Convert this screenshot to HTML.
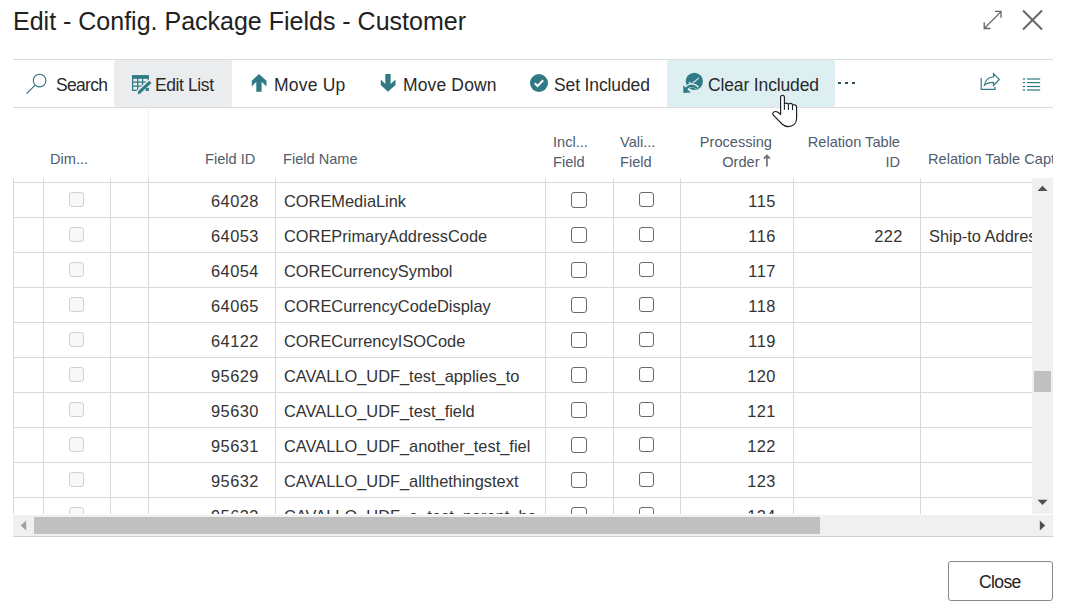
<!DOCTYPE html>
<html><head><meta charset="utf-8">
<style>
*{box-sizing:border-box;margin:0;padding:0}
html,body{width:1075px;height:608px;overflow:hidden;background:#fff}
body{position:relative;font-family:"Liberation Sans",sans-serif;color:#212121}
.a{position:absolute;white-space:nowrap}
.title{left:13px;top:4px;font-size:25px;line-height:34px;color:#212121}
.tb{font-size:17.5px;line-height:20px;color:#2a2a2a}
.hd{font-size:14.6px;line-height:20px;color:#505c6d}
.cell{font-size:16.4px;line-height:20px;color:#333}
.vl{position:absolute;width:1px;background:#d8d8de}
.hl{position:absolute;height:1px;background:#d8d8de}
.cb{position:absolute;width:16px;height:16px;border:1.5px solid #6a6a6a;border-radius:3px;background:#fff}
.cbd{position:absolute;width:15px;height:15px;border:1px solid #d2d2d2;border-radius:3px;background:#f8f8f8}
</style></head><body>

<div class="a title">Edit - Config. Package Fields - Customer</div>
<svg class="a" style="left:980px;top:8px" width="24" height="24" viewBox="0 0 24 24" fill="none" stroke="#666" stroke-width="1.3">
<path d="M4.2 20.5 L21 3.6 M15 3.4 H21 V9.8 M4.2 14.2 V20.5 H10.4"/></svg>
<svg class="a" style="left:1020px;top:8px" width="24" height="24" viewBox="0 0 24 24" fill="none" stroke="#666" stroke-width="2">
<path d="M3 2.5 L22 21.5 M22 2.5 L3 21.5"/></svg>
<div class="hl" style="left:13px;top:59px;width:1040px;background:#dcdcdc"></div>
<div class="hl" style="left:13px;top:107px;width:1040px;background:#dcdcdc"></div>
<div class="a" style="left:114px;top:60px;width:118px;height:47px;background:#ebecee;border-radius:2px"></div>
<div class="a" style="left:667px;top:60px;width:168px;height:47px;background:#ddeff1;border-radius:2px"></div>
<div class="a tb" style="left:56px;top:75px;letter-spacing:-0.7px">Search</div>
<div class="a tb" style="left:155px;top:75px;letter-spacing:-0.4px">Edit List</div>
<div class="a tb" style="left:274px;top:75px;letter-spacing:0.2px">Move Up</div>
<div class="a tb" style="left:403px;top:75px;letter-spacing:0.14px">Move Down</div>
<div class="a tb" style="left:554px;top:75px;letter-spacing:-0.13px">Set Included</div>
<div class="a tb" style="left:708px;top:75px;letter-spacing:-0.14px">Clear Included</div>
<div class="a" style="left:838px;top:82px;width:3px;height:2px;background:#2f4f5c"></div>
<div class="a" style="left:845px;top:82px;width:3px;height:2px;background:#2f4f5c"></div>
<div class="a" style="left:852px;top:82px;width:3px;height:2px;background:#2f4f5c"></div>
<svg class="a" style="left:24px;top:72px" width="26" height="24" viewBox="0 0 26 24" fill="none" stroke="#2f6d7c" stroke-width="1.1">
<circle cx="15.6" cy="8.6" r="6.3"/><path d="M11.1 13.2 L2.6 21.6"/></svg>
<svg class="a" style="left:131px;top:74px" width="22" height="21" viewBox="0 0 22 21">
<g fill="none" stroke="#2f7a85" stroke-width="1.25">
<rect x="1.6" y="2" width="15.6" height="14.3"/>
<path d="M1.6 8.1 H17.2 M1.6 12.1 H17.2 M6.7 4 V16.3 M11.6 4 V16.3"/>
</g>
<rect x="1" y="1.2" width="16.8" height="3.6" fill="#2f7a85"/>
<path d="M7.2 19.4 L19.6 7.6" stroke="#ebecee" stroke-width="6"/>
<path d="M8.2 18.4 L19.4 7.8" stroke="#2f7a85" stroke-width="3.1"/>
<path d="M6.6 20.2 L7.4 17 L9.8 19.3 Z" fill="#2f7a85"/>
<rect x="14.8" y="14" width="2.6" height="2.6" fill="#2f7a85"/>
</svg>
<svg class="a" style="left:250px;top:74px" width="18" height="18" viewBox="0 0 18 18">
<path d="M8.9 0.1 L16.5 6.8 L16.5 12.5 L11.6 7.8 L11.6 17.8 L6.3 17.8 L6.3 7.8 L1.8 12.5 L1.8 6.8 Z" fill="#2f7a85"/></svg>
<svg class="a" style="left:379px;top:74px" width="18" height="18" viewBox="0 0 18 18">
<path d="M8.9 17.8 L16.5 11.1 L16.5 5.4 L11.6 10.1 L11.6 0.1 L6.3 0.1 L6.3 10.1 L1.8 5.4 L1.8 11.1 Z" fill="#2f7a85"/></svg>
<svg class="a" style="left:530px;top:74px" width="18" height="18" viewBox="0 0 18 18">
<circle cx="9" cy="9" r="9" fill="#2f7a85"/><path d="M4.8 9.2 L7.6 12 L13.2 6.3" fill="none" stroke="#fff" stroke-width="2"/></svg>
<svg class="a" style="left:681px;top:70px" width="24" height="24" viewBox="0 0 24 24">
<circle cx="13.3" cy="11.3" r="8.6" fill="#2f7a85"/>
<path d="M7.8 12.6 H9.6 M11.8 12.6 L13.6 11.6 L17.9 7.8" fill="none" stroke="#ddeff1" stroke-width="1.1"/>
<path d="M4.5 19.5 Q10.5 11.5 16.5 18" fill="none" stroke="#ddeff1" stroke-width="4.2"/>
<path d="M5.2 18.6 Q10.5 13.2 16 18.2" fill="none" stroke="#2f7a85" stroke-width="2.3"/>
<path d="M2.2 15.2 L2.4 23 L9.8 22.6 Z" fill="#2f7a85"/>
</svg>
<svg class="a" style="left:979px;top:72px" width="22" height="20" viewBox="0 0 22 20" fill="none" stroke="#2f7a85" stroke-width="1.2">
<path d="M2.2 6 V17.4 H16 V15"/>
<path d="M5.5 13.1 C6.5 7.5 10 5 14.5 5 V1.6 L20.3 7.5 L14.5 13.5 V10.3 C10 10.3 7.5 11 5.5 13.1 Z" stroke-linejoin="miter"/>
</svg>
<svg class="a" style="left:1022px;top:77px" width="20" height="15" viewBox="0 0 20 15" fill="#2f7a85">
<rect x="0.8" y="1.4" width="2.4" height="1.2"/><rect x="5" y="1.4" width="13.2" height="1.2"/>
<rect x="0.8" y="5.0" width="2.4" height="1.2"/><rect x="5" y="5.0" width="13.2" height="1.2"/>
<rect x="0.8" y="8.9" width="2.4" height="1.2"/><rect x="5" y="8.9" width="13.2" height="1.2"/>
<rect x="0.8" y="12.4" width="2.4" height="1.2"/><rect x="5" y="12.4" width="13.2" height="1.2"/>
</svg>
<div class="vl" style="left:148px;top:108px;height:70px;background:#efefef"></div>
<div class="a hd" style="left:50px;top:149px">Dim...</div>
<div class="a hd" style="left:205px;top:149px">Field ID</div>
<div class="a hd" style="left:283px;top:149px">Field Name</div>
<div class="a hd" style="left:553px;top:132px">Incl...<br>Field</div>
<div class="a hd" style="left:620px;top:132px">Vali...<br>Field</div>
<div class="a hd" style="left:680px;top:132px;width:92px;text-align:right">Processing</div>
<div class="a hd" style="left:680px;top:152px;width:79.5px;text-align:right">Order</div>
<svg class="a" style="left:763px;top:154px" width="8" height="13" viewBox="0 0 8 13" fill="none" stroke="#707070" stroke-width="1.7"><path d="M3.9 1.5 V12.5 M0.9 4.6 L3.9 1.4 L6.9 4.6"/></svg>
<div class="a hd" style="left:793px;top:132px;width:107px;text-align:right">Relation Table<br>ID</div>
<div class="a" style="left:921px;top:149px;width:132px;overflow:hidden"><div class="hd" style="white-space:nowrap;padding-left:7px">Relation Table Caption</div></div>
<div class="a" style="left:0;top:178px;width:1032px;height:336px;overflow:hidden">
<div class="vl" style="left:13px;top:0;height:336px"></div>
<div class="vl" style="left:43px;top:0;height:336px"></div>
<div class="vl" style="left:110px;top:0;height:336px"></div>
<div class="vl" style="left:148px;top:0;height:336px"></div>
<div class="vl" style="left:275px;top:0;height:336px"></div>
<div class="vl" style="left:545px;top:0;height:336px"></div>
<div class="vl" style="left:613px;top:0;height:336px"></div>
<div class="vl" style="left:680px;top:0;height:336px"></div>
<div class="vl" style="left:793px;top:0;height:336px"></div>
<div class="vl" style="left:920px;top:0;height:336px"></div>
<div class="hl" style="left:13px;top:4px;width:1019px"></div>
<div class="hl" style="left:13px;top:39px;width:1019px"></div>
<div class="hl" style="left:13px;top:74px;width:1019px"></div>
<div class="hl" style="left:13px;top:109px;width:1019px"></div>
<div class="hl" style="left:13px;top:144px;width:1019px"></div>
<div class="hl" style="left:13px;top:179px;width:1019px"></div>
<div class="hl" style="left:13px;top:214px;width:1019px"></div>
<div class="hl" style="left:13px;top:249px;width:1019px"></div>
<div class="hl" style="left:13px;top:284px;width:1019px"></div>
<div class="hl" style="left:13px;top:319px;width:1019px"></div>
<div class="cbd" style="left:69px;top:14px"></div>
<div class="a cell" style="left:148px;top:13px;width:111px;text-align:right;letter-spacing:0.5px">64028</div>
<div class="a" style="left:276px;top:13px;width:269px;overflow:hidden"><div class="cell" style="padding-left:8px;white-space:nowrap">COREMediaLink</div></div>
<div class="cb" style="left:571px;top:14px"></div>
<div class="cb" style="left:639px;top:14px;width:15px;height:15px"></div>
<div class="a cell" style="left:680px;top:13px;width:96px;text-align:right;letter-spacing:0.5px">115</div>
<div class="cbd" style="left:69px;top:49px"></div>
<div class="a cell" style="left:148px;top:48px;width:111px;text-align:right;letter-spacing:0.5px">64053</div>
<div class="a" style="left:276px;top:48px;width:269px;overflow:hidden"><div class="cell" style="padding-left:8px;white-space:nowrap">COREPrimaryAddressCode</div></div>
<div class="cb" style="left:571px;top:49px"></div>
<div class="cb" style="left:639px;top:49px;width:15px;height:15px"></div>
<div class="a cell" style="left:680px;top:48px;width:96px;text-align:right;letter-spacing:0.5px">116</div>
<div class="a cell" style="left:793px;top:48px;width:110px;text-align:right;letter-spacing:0.5px">222</div>
<div class="a" style="left:921px;top:48px;width:111px;overflow:hidden"><div class="cell" style="padding-left:8px;white-space:nowrap">Ship-to Address</div></div>
<div class="cbd" style="left:69px;top:84px"></div>
<div class="a cell" style="left:148px;top:83px;width:111px;text-align:right;letter-spacing:0.5px">64054</div>
<div class="a" style="left:276px;top:83px;width:269px;overflow:hidden"><div class="cell" style="padding-left:8px;white-space:nowrap">CORECurrencySymbol</div></div>
<div class="cb" style="left:571px;top:84px"></div>
<div class="cb" style="left:639px;top:84px;width:15px;height:15px"></div>
<div class="a cell" style="left:680px;top:83px;width:96px;text-align:right;letter-spacing:0.5px">117</div>
<div class="cbd" style="left:69px;top:119px"></div>
<div class="a cell" style="left:148px;top:118px;width:111px;text-align:right;letter-spacing:0.5px">64065</div>
<div class="a" style="left:276px;top:118px;width:269px;overflow:hidden"><div class="cell" style="padding-left:8px;white-space:nowrap">CORECurrencyCodeDisplay</div></div>
<div class="cb" style="left:571px;top:119px"></div>
<div class="cb" style="left:639px;top:119px;width:15px;height:15px"></div>
<div class="a cell" style="left:680px;top:118px;width:96px;text-align:right;letter-spacing:0.5px">118</div>
<div class="cbd" style="left:69px;top:154px"></div>
<div class="a cell" style="left:148px;top:153px;width:111px;text-align:right;letter-spacing:0.5px">64122</div>
<div class="a" style="left:276px;top:153px;width:269px;overflow:hidden"><div class="cell" style="padding-left:8px;white-space:nowrap">CORECurrencyISOCode</div></div>
<div class="cb" style="left:571px;top:154px"></div>
<div class="cb" style="left:639px;top:154px;width:15px;height:15px"></div>
<div class="a cell" style="left:680px;top:153px;width:96px;text-align:right;letter-spacing:0.5px">119</div>
<div class="cbd" style="left:69px;top:189px"></div>
<div class="a cell" style="left:148px;top:188px;width:111px;text-align:right;letter-spacing:0.5px">95629</div>
<div class="a" style="left:276px;top:188px;width:269px;overflow:hidden"><div class="cell" style="padding-left:8px;white-space:nowrap">CAVALLO_UDF_test_applies_to</div></div>
<div class="cb" style="left:571px;top:189px"></div>
<div class="cb" style="left:639px;top:189px;width:15px;height:15px"></div>
<div class="a cell" style="left:680px;top:188px;width:96px;text-align:right;letter-spacing:0.5px">120</div>
<div class="cbd" style="left:69px;top:224px"></div>
<div class="a cell" style="left:148px;top:223px;width:111px;text-align:right;letter-spacing:0.5px">95630</div>
<div class="a" style="left:276px;top:223px;width:269px;overflow:hidden"><div class="cell" style="padding-left:8px;white-space:nowrap">CAVALLO_UDF_test_field</div></div>
<div class="cb" style="left:571px;top:224px"></div>
<div class="cb" style="left:639px;top:224px;width:15px;height:15px"></div>
<div class="a cell" style="left:680px;top:223px;width:96px;text-align:right;letter-spacing:0.5px">121</div>
<div class="cbd" style="left:69px;top:259px"></div>
<div class="a cell" style="left:148px;top:258px;width:111px;text-align:right;letter-spacing:0.5px">95631</div>
<div class="a" style="left:276px;top:258px;width:269px;overflow:hidden"><div class="cell" style="padding-left:8px;white-space:nowrap">CAVALLO_UDF_another_test_fiel</div></div>
<div class="cb" style="left:571px;top:259px"></div>
<div class="cb" style="left:639px;top:259px;width:15px;height:15px"></div>
<div class="a cell" style="left:680px;top:258px;width:96px;text-align:right;letter-spacing:0.5px">122</div>
<div class="cbd" style="left:69px;top:294px"></div>
<div class="a cell" style="left:148px;top:293px;width:111px;text-align:right;letter-spacing:0.5px">95632</div>
<div class="a" style="left:276px;top:293px;width:269px;overflow:hidden"><div class="cell" style="padding-left:8px;white-space:nowrap">CAVALLO_UDF_allthethingstext</div></div>
<div class="cb" style="left:571px;top:294px"></div>
<div class="cb" style="left:639px;top:294px;width:15px;height:15px"></div>
<div class="a cell" style="left:680px;top:293px;width:96px;text-align:right;letter-spacing:0.5px">123</div>
<div class="cbd" style="left:69px;top:329px"></div>
<div class="a cell" style="left:148px;top:328px;width:111px;text-align:right;letter-spacing:0.5px">95633</div>
<div class="a" style="left:276px;top:328px;width:269px;overflow:hidden"><div class="cell" style="padding-left:8px;white-space:nowrap">CAVALLO_UDF_a_test_parent_ba</div></div>
<div class="cb" style="left:571px;top:329px"></div>
<div class="cb" style="left:639px;top:329px;width:15px;height:15px"></div>
<div class="a cell" style="left:680px;top:328px;width:96px;text-align:right;letter-spacing:0.5px">124</div>
</div>
<div class="a" style="left:1032px;top:178px;width:21px;height:336px;background:#f0f0f0"></div>
<div class="a" style="left:1034px;top:371px;width:17px;height:21px;background:#c0c0c0"></div>
<svg class="a" style="left:1037px;top:185px" width="11" height="7"><path d="M0.5 6 L5.5 0.8 L10.5 6 Z" fill="#505050"/></svg>
<svg class="a" style="left:1037px;top:499px" width="11" height="7"><path d="M0.5 0.8 L5.5 6 L10.5 0.8 Z" fill="#505050"/></svg>
<div class="a" style="left:13px;top:515px;width:1040px;height:21px;background:#f0f0f0"></div>
<div class="a" style="left:34px;top:517px;width:786px;height:17px;background:#c0c0c0"></div>
<svg class="a" style="left:20px;top:520px" width="7" height="11"><path d="M6.2 0.5 L0.8 5.5 L6.2 10.5 Z" fill="#a0a0a0"/></svg>
<svg class="a" style="left:1039px;top:520px" width="7" height="11"><path d="M0.8 0.5 L6.2 5.5 L0.8 10.5 Z" fill="#505050"/></svg>
<div class="hl" style="left:13px;top:536px;width:1040px;background:#d0d0d0"></div>
<div class="a" style="left:948px;top:561px;width:105px;height:40px;border:1px solid #8a8886;border-radius:3px;background:#fff"></div>
<div class="a" style="left:979px;top:572px;font-size:17.5px;line-height:20px;color:#212121;letter-spacing:-0.6px">Close</div>
<svg class="a" style="left:770px;top:93px" width="32" height="36" viewBox="0 0 32 36">
<path d="M10.6 21.3 V4.4 C10.6 3 11.4 2.2 12.5 2.2 C13.6 2.2 14.4 3 14.4 4.4 V11.4 C14.6 10.6 15.5 10.1 16.5 10.1 C17.5 10.1 18.3 10.7 18.4 11.6 C18.7 10.8 19.5 10.4 20.5 10.4 C21.6 10.4 22.4 11.2 22.5 12.3 C22.9 11.9 23.6 11.7 24.4 11.8 C25.7 12 26.6 13 26.6 14.5 V25.5 C26.6 30.5 23 33.6 18.3 33.6 C15.8 33.6 13.8 32.7 12 31 L3.6 22.4 C2.6 21.4 2.4 20.2 3.3 19.4 C4.4 18.4 6.2 18.3 7.6 19.1 Z" fill="#fff" stroke="#1c1c24" stroke-width="1.15"/>
<path d="M14.4 11.4 V16.8 M18.4 11.6 V17 M22.5 12.3 V17" fill="none" stroke="#1c1c24" stroke-width="1.1"/>
</svg>
</body></html>
